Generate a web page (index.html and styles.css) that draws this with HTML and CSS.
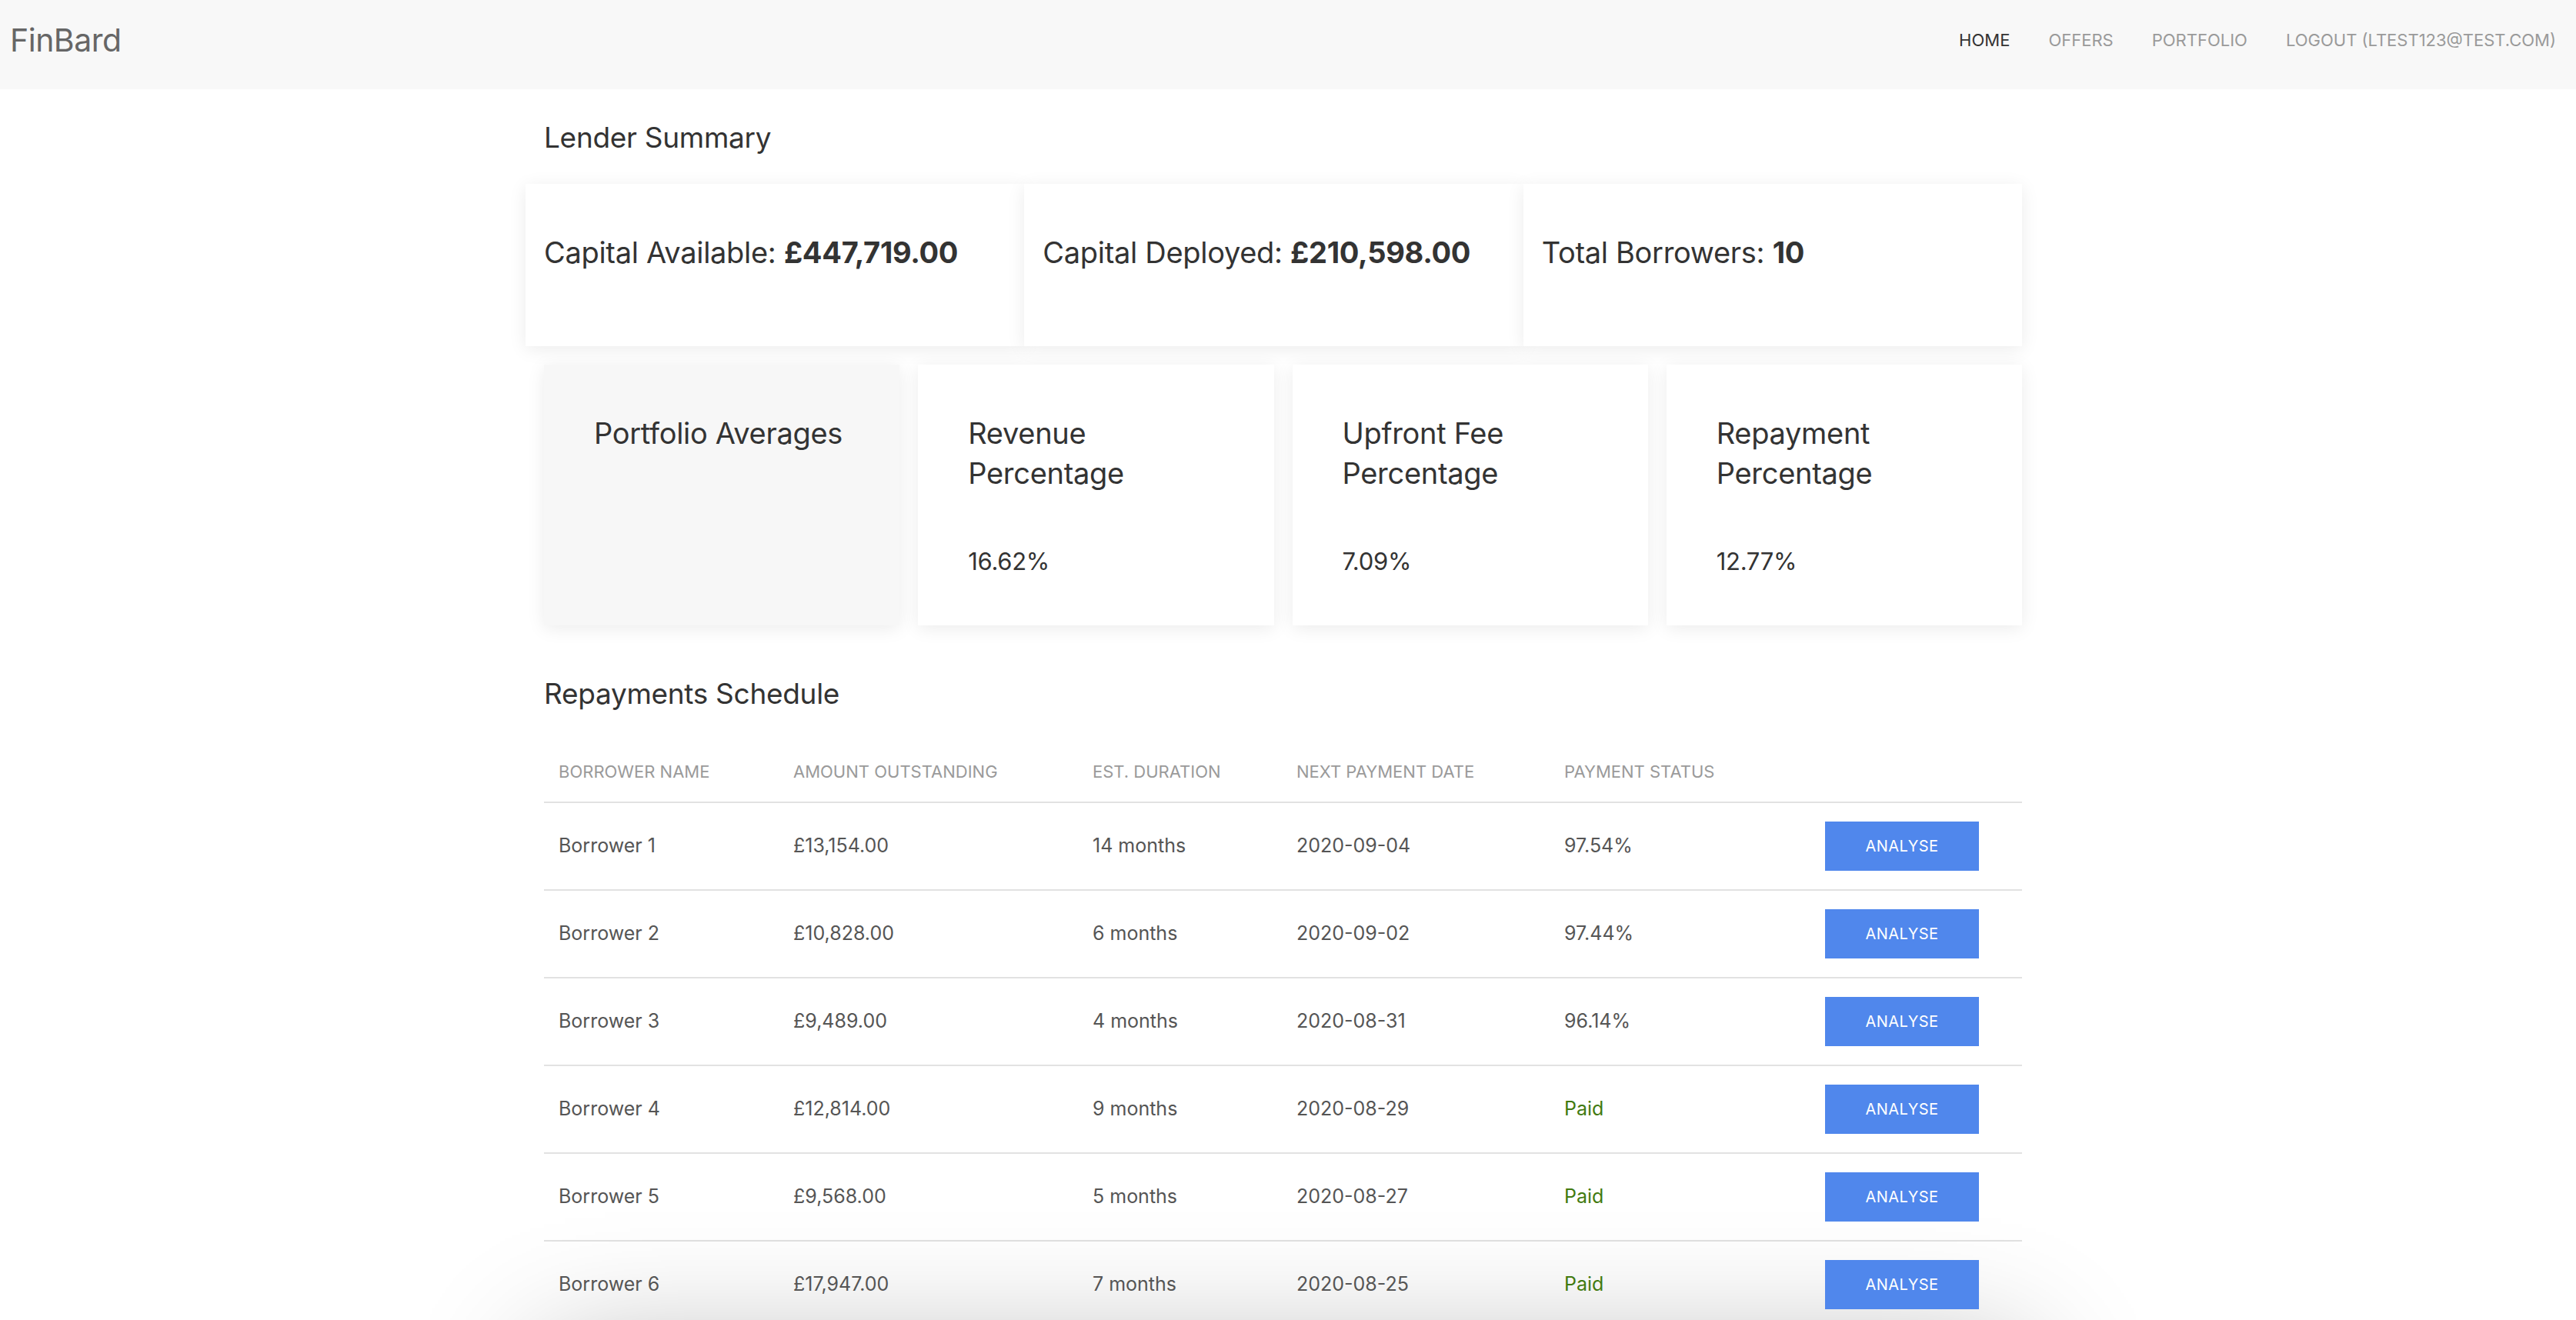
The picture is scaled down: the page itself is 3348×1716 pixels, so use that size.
FILE: index.html
```html
<!DOCTYPE html>
<html lang="en">
<head>
<meta charset="utf-8">
<title>FinBard - Lender Summary</title>
<link rel="stylesheet" href="styles.css">
</head>
<body>
<nav class="navbar">
  <a class="brand" href="#">FinBard</a>
  <ul class="nav-links">
    <li class="nav-item active">Home</li>
    <li class="nav-item">Offers</li>
    <li class="nav-item">Portfolio</li>
    <li class="nav-item">Logout (ltest123@test.com)</li>
  </ul>
</nav>
<main class="main">
  <div class="container">
    <h2 class="section-title">Lender Summary</h2>
    <div class="summary-row">
      <div class="summary-card">Capital Available: <strong>£447,719.00</strong></div>
      <div class="summary-card">Capital Deployed: <strong>£210,598.00</strong></div>
      <div class="summary-card">Total Borrowers: <strong>10</strong></div>
    </div>
    <div class="averages-row">
      <div class="avg-card avg-card-head">
        <div class="avg-title">Portfolio Averages</div>
      </div>
      <div class="avg-card">
        <div class="avg-title">Revenue Percentage</div>
        <div class="avg-value">16.62%</div>
      </div>
      <div class="avg-card">
        <div class="avg-title">Upfront Fee Percentage</div>
        <div class="avg-value">7.09%</div>
      </div>
      <div class="avg-card">
        <div class="avg-title">Repayment Percentage</div>
        <div class="avg-value">12.77%</div>
      </div>
    </div>
    <h2 class="section-title schedule-title">Repayments Schedule</h2>
    <table class="schedule">
      <colgroup>
        <col class="col-name"><col class="col-amount"><col class="col-duration"><col class="col-date"><col class="col-status"><col class="col-action">
      </colgroup>
      <thead>
        <tr><th>Borrower Name</th><th>Amount Outstanding</th><th>Est. Duration</th><th>Next Payment Date</th><th>Payment Status</th><th></th></tr>
      </thead>
      <tbody>
        <tr><td>Borrower 1</td><td>£13,154.00</td><td>14 months</td><td>2020-09-04</td><td>97.54%</td><td><button class="btn">Analyse</button></td></tr>
        <tr><td>Borrower 2</td><td>£10,828.00</td><td>6 months</td><td>2020-09-02</td><td>97.44%</td><td><button class="btn">Analyse</button></td></tr>
        <tr><td>Borrower 3</td><td>£9,489.00</td><td>4 months</td><td>2020-08-31</td><td>96.14%</td><td><button class="btn">Analyse</button></td></tr>
        <tr><td>Borrower 4</td><td>£12,814.00</td><td>9 months</td><td>2020-08-29</td><td class="paid">Paid</td><td><button class="btn">Analyse</button></td></tr>
        <tr><td>Borrower 5</td><td>£9,568.00</td><td>5 months</td><td>2020-08-27</td><td class="paid">Paid</td><td><button class="btn">Analyse</button></td></tr>
        <tr><td>Borrower 6</td><td>£17,947.00</td><td>7 months</td><td>2020-08-25</td><td class="paid">Paid</td><td><button class="btn">Analyse</button></td></tr>
      </tbody>
    </table>
    <div class="chart-card"></div>
  </div>
</main>
</body>
</html>
```
FILE: styles.css
```css
* { box-sizing: border-box; }

html, body {
  margin: 0;
  padding: 0;
  background: #ffffff;
  font-family: Inter, "Open Sans", "Liberation Sans", sans-serif;
  color: #333333;
}

.navbar {
  display: flex;
  align-items: center;
  justify-content: space-between;
  height: 116px;
  padding: 0 26px 12px 13px;
  background: #f8f8f8;
}

.brand {
  font-size: 41px;
  line-height: 1;
  color: #666666;
  text-decoration: none;
  letter-spacing: -0.5px;
}

.nav-links {
  display: flex;
  gap: 50px;
  margin: 0;
  padding: 0;
  list-style: none;
}

.nav-item {
  font-size: 22px;
  line-height: 1;
  text-transform: uppercase;
  color: #9a9a9a;
}

.nav-item.active { color: #333333; }

.main {
  padding-right: 13px;
  overflow: hidden;
}

.container {
  width: 1921px;
  margin: 0 auto;
}

.section-title {
  margin: 41px 0 38px;
  font-size: 37px;
  font-weight: 400;
  line-height: 1.2;
  color: #333333;
  letter-spacing: -0.3px;
}

.summary-row {
  display: grid;
  grid-template-columns: repeat(3, 1fr);
  margin-left: -24px;
}

.summary-card {
  height: 211px;
  padding: 67px 24px 0;
  background: #ffffff;
  box-shadow: 0 4px 22px rgba(0, 0, 0, 0.08);
  font-size: 38px;
  line-height: 1.2;
  color: #333333;
  letter-spacing: -0.3px;
}

.summary-card strong { font-weight: 700; }

.averages-row {
  display: grid;
  grid-template-columns: repeat(4, 1fr);
  gap: 24px;
  margin-top: 24px;
}

.avg-card {
  height: 339px;
  padding: 63px 64px 0 65px;
  background: #ffffff;
  box-shadow: 0 4px 22px rgba(0, 0, 0, 0.08);
}

.avg-card-head { background: #f7f7f7; }

.avg-title {
  font-size: 38px;
  line-height: 52px;
  color: #333333;
  letter-spacing: -0.3px;
}

.avg-card-head .avg-title { white-space: nowrap; }

.avg-value {
  margin-top: 65px;
  font-size: 31px;
  line-height: 48px;
  color: #333333;
  letter-spacing: -0.3px;
}

.schedule-title {
  margin: 67px 0 32px;
}

.schedule {
  width: 100%;
  border-collapse: collapse;
  table-layout: fixed;
}

.col-name { width: 305px; }
.col-amount { width: 389px; }
.col-duration { width: 265px; }
.col-date { width: 348px; }
.col-status { width: 339px; }

.schedule th {
  padding: 30px 19px 22px;
  font-size: 22px;
  font-weight: 400;
  line-height: 1.5;
  text-align: left;
  text-transform: uppercase;
  color: #9a9a9a;
  border-bottom: 2px solid #e2e2e2;
}

.schedule td {
  padding: 24px 19px;
  font-size: 25px;
  line-height: 1.5;
  color: #555555;
  vertical-align: middle;
  border-bottom: 2px solid #e2e2e2;
}

.schedule td.paid { color: #427a10; }

.btn {
  position: relative;
  display: block;
  width: 200px;
  height: 64px;
  padding: 0;
  border: none;
  background: #5087ec;
  color: #ffffff;
  font-family: Inter, "Open Sans", "Liberation Sans", sans-serif;
  font-size: 20px;
  text-transform: uppercase;
  letter-spacing: 0.5px;
}

.chart-card {
  height: 500px;
  margin-top: 30px;
  background: #ffffff;
  box-shadow: 0 0 160px rgba(0, 0, 0, 0.3);
}
```
